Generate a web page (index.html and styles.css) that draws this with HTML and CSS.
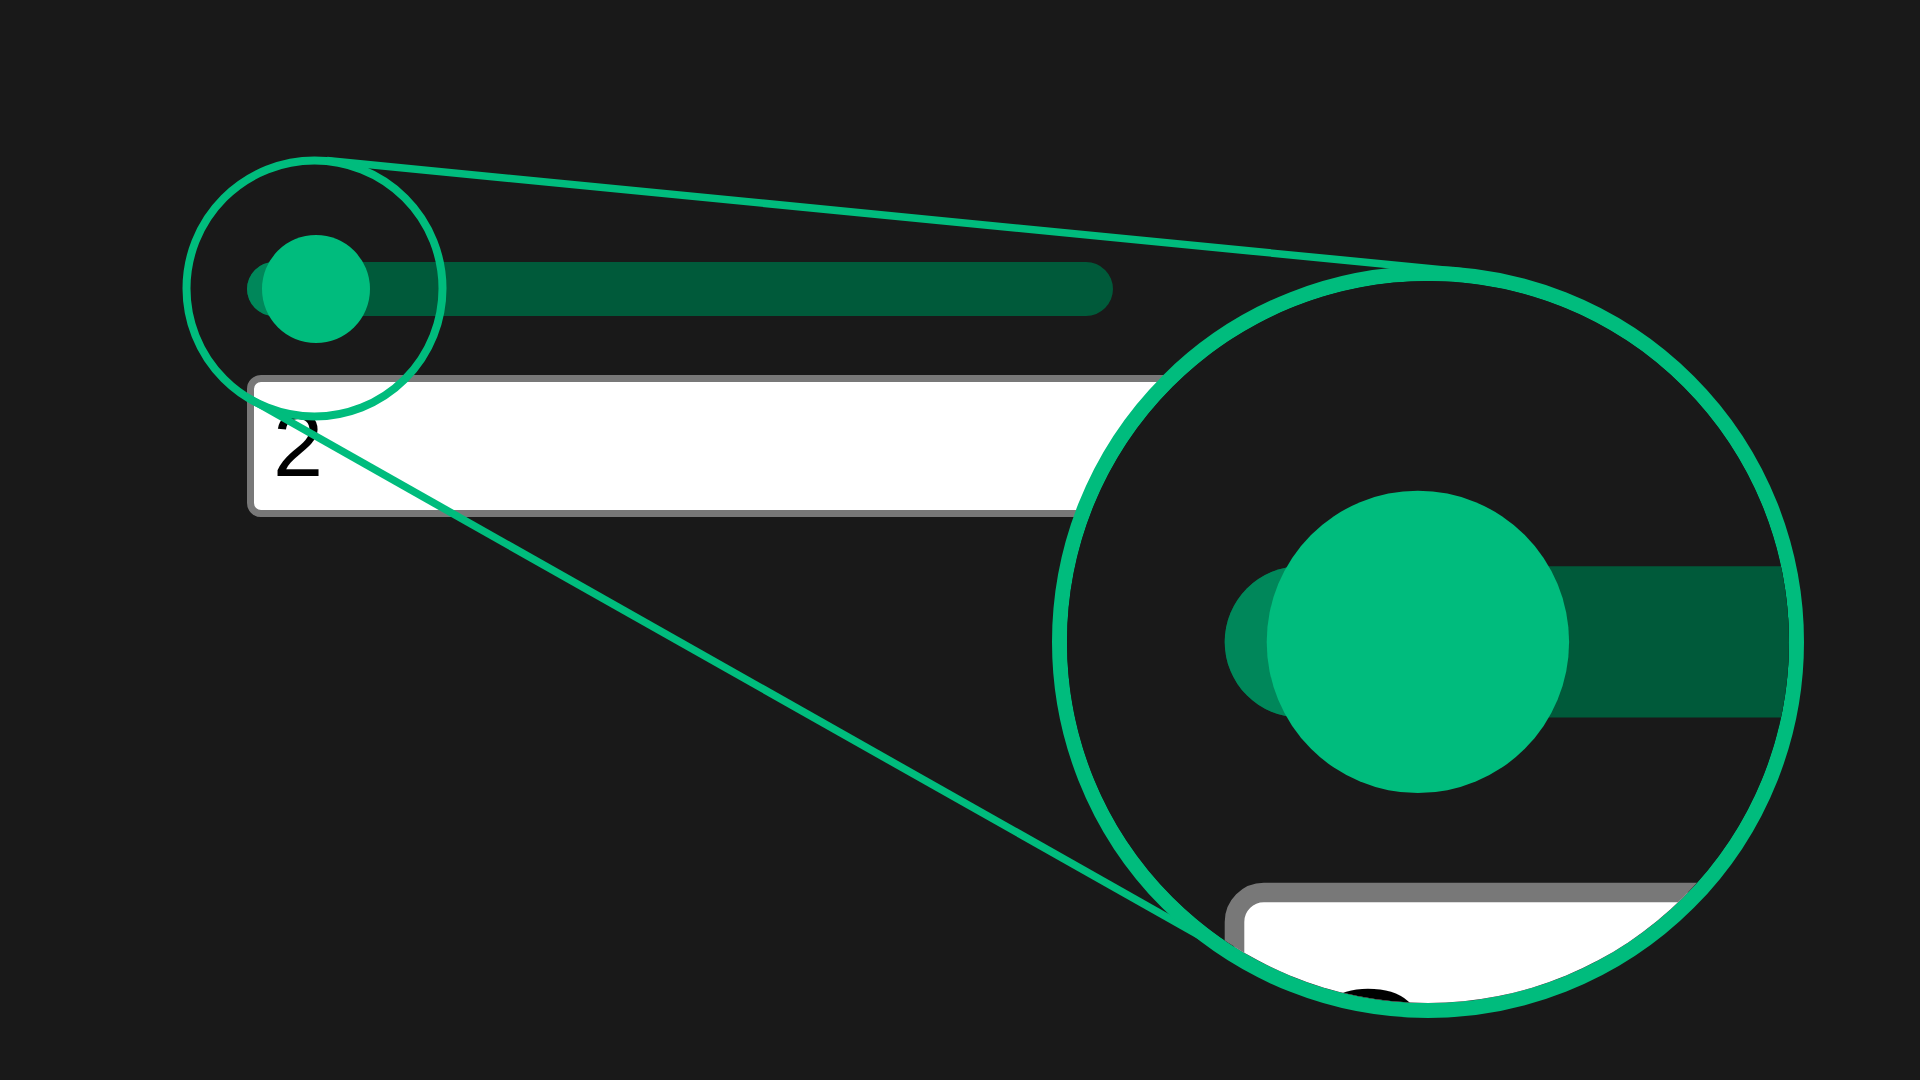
FILE: index.html
```html
<!DOCTYPE html>
<html lang="en">
<head>
<meta charset="utf-8">
<title>Slider magnifier</title>
<link rel="stylesheet" href="styles.css">
</head>
<body>
<div class="stage">
  <div class="scene">
    <div class="slider">
      <div class="slider-fill"></div>
      <div class="slider-thumb"></div>
    </div>
    <div class="field">2</div>
  </div>

  <svg class="callout" width="1920" height="1080" viewBox="0 0 1920 1080" aria-hidden="true">
    <circle class="callout-ring" cx="314.5" cy="288.5" r="128"></circle>
    <line class="callout-line" x1="327" y1="160.5" x2="1465" y2="272"></line>
    <line class="callout-line" x1="251.5" y1="399.9" x2="1246.7" y2="962.3"></line>
  </svg>

  <div class="lens">
    <div class="scene scene-zoomed" aria-hidden="true">
      <div class="slider">
        <div class="slider-fill"></div>
        <div class="slider-thumb"></div>
      </div>
      <div class="field">2</div>
    </div>
  </div>
</div>
</body>
</html>
```

FILE: styles.css
```css
html, body {
  margin: 0;
  padding: 0;
  background: #191919;
}

.stage {
  position: relative;
  width: 1920px;
  height: 1080px;
  overflow: hidden;
  background: #191919;
}

.scene {
  box-sizing: border-box;
  width: 1920px;
  height: 1080px;
  padding: 262px 0 0 247px;
  display: flex;
  flex-direction: column;
  align-items: flex-start;
  background: #191919;
}

.slider {
  position: relative;
  width: 866px;
  height: 54px;
  border-radius: 27px;
  background: #005a3a;
}

.slider-fill {
  width: 69px;
  height: 54px;
  border-radius: 27px 0 0 27px;
  background: #00875a;
}

.slider-thumb {
  position: absolute;
  left: 15px;
  top: -27px;
  width: 108px;
  height: 108px;
  border-radius: 50%;
  background: #00bc7d;
}

.field {
  box-sizing: border-box;
  margin-top: 59px;
  width: 1000px;
  height: 142px;
  padding: 18px 0 0 19px;
  border: 7px solid #787878;
  border-radius: 14px;
  background: #ffffff;
  color: #000000;
  font-family: "Liberation Sans", Arial, sans-serif;
  font-size: 90px;
  line-height: 90px;
}

.callout {
  position: absolute;
  left: 0;
  top: 0;
}

.callout-ring {
  fill: none;
  stroke: #00bc7d;
  stroke-width: 8;
}

.callout-line {
  stroke: #00bc7d;
  stroke-width: 7.5;
}

.lens {
  position: absolute;
  left: 1052px;
  top: 266px;
  box-sizing: border-box;
  width: 752px;
  height: 752px;
  border: 15px solid #00bc7d;
  border-radius: 50%;
  overflow: hidden;
  background: #191919;
}

.scene-zoomed {
  position: absolute;
  left: 0;
  top: 0;
  transform-origin: 0 0;
  transform: translate(-533.9px, -448.3px) scale(2.8);
}
```
